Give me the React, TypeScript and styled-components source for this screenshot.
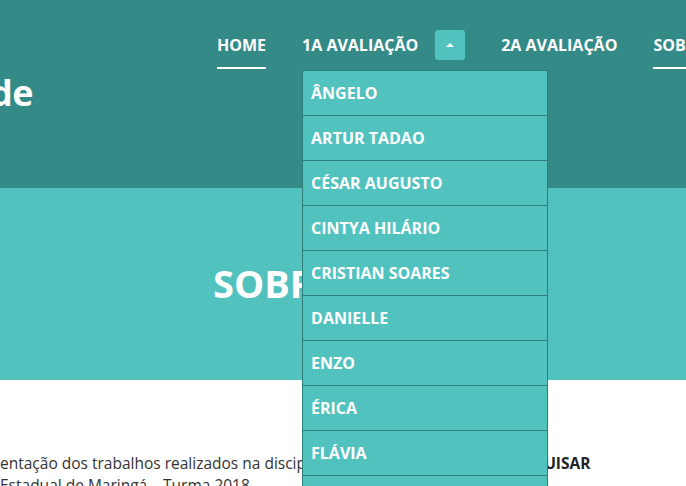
import React from "react";
import styled, { createGlobalStyle } from "styled-components";

const GlobalStyle = createGlobalStyle`
  html, body {
    margin: 0;
    padding: 0;
    width: 686px;
    height: 486px;
    overflow: hidden;
    background: #ffffff;
    font-family: "Open Sans", "Noto Sans", sans-serif;
  }
  * { box-sizing: border-box; }
`;

const Page = styled.div`
  width: 686px;
  height: 486px;
  overflow: hidden;
  display: flex;
  flex-direction: column;
`;

const Header = styled.header`
  flex: 0 0 188px;
  background: #338a87;
  display: grid;
  grid-template-columns: 217px 1fr;
  align-items: start;
  position: relative;
  z-index: 2;
`;

const Brand = styled.h1`
  margin: 75px 0 0 -10px;
  font-size: 36px;
  line-height: 36px;
  font-weight: 700;
  color: #ffffff;
  letter-spacing: -0.5px;
`;

const Nav = styled.ul`
  list-style: none;
  margin: 30px 0 0 0;
  padding: 0;
  display: flex;
  gap: 36px;
  white-space: nowrap;
`;

const NavItem = styled.li`
  position: relative;
  display: flex;
  align-items: flex-start;
  gap: 17px;
  flex-shrink: 0;
`;

const NavLink = styled.a<{ $active?: boolean }>`
  display: block;
  font-size: 16px;
  font-weight: 700;
  line-height: 30px;
  padding-bottom: 7px;
  color: #ffffff;
  text-decoration: none;
  border-bottom: 2px solid ${(p) => (p.$active ? "#ffffff" : "transparent")};
`;

const Toggle = styled.button`
  width: 30px;
  height: 30px;
  border: none;
  border-radius: 3px;
  background: #52c2bf;
  display: flex;
  align-items: center;
  justify-content: center;
  padding: 0;
  cursor: pointer;
`;

const Caret = styled.span`
  width: 0;
  height: 0;
  border-left: 4px solid transparent;
  border-right: 4px solid transparent;
  border-bottom: 4px solid #ffffff;
`;

const Dropdown = styled.ul`
  position: absolute;
  left: 0;
  top: 40px;
  width: 246px;
  margin: 0;
  padding: 0;
  list-style: none;
  background: #52c2bf;
  border: 1px solid #2f7d7a;
  border-bottom: none;
  z-index: 10;
`;

const DropItem = styled.li`
  height: 45px;
  padding: 0 8px;
  display: flex;
  align-items: center;
  border-bottom: 1px solid #2f7d7a;
  font-size: 16px;
  font-weight: 700;
  color: #ffffff;
`;

const Hero = styled.section`
  flex: 0 0 192px;
  background: #52c2bf;
  display: flex;
  align-items: flex-start;
`;

const HeroTitle = styled.h2`
  margin: 76px 0 0 213px;
  font-size: 38px;
  line-height: 38px;
  font-weight: 700;
  color: #ffffff;
`;

const Content = styled.section`
  flex: 1;
  background: #ffffff;
  padding-top: 72px;
`;

const Paragraph = styled.p`
  margin: 0;
  font-size: 15.5px;
  line-height: 22px;
  color: #333333;
  white-space: nowrap;
`;

const Strong = styled.b`
  font-weight: 700;
  color: #222222;
`;

const students = [
  "ÂNGELO",
  "ARTUR TADAO",
  "CÉSAR AUGUSTO",
  "CINTYA HILÁRIO",
  "CRISTIAN SOARES",
  "DANIELLE",
  "ENZO",
  "ÉRICA",
  "FLÁVIA",
  "GABRIEL",
  "GUSTAVO",
];

export default function App() {
  return (
    <>
      <GlobalStyle />
      <Page>
        <Header>
          <Brand>de</Brand>
          <Nav>
            <NavItem>
              <NavLink $active>HOME</NavLink>
            </NavItem>
            <NavItem>
              <NavLink>1A AVALIAÇÃO</NavLink>
              <Toggle aria-label="toggle">
                <Caret />
              </Toggle>
              <Dropdown>
                {students.map((s) => (
                  <DropItem key={s}>{s}</DropItem>
                ))}
              </Dropdown>
            </NavItem>
            <NavItem>
              <NavLink>2A AVALIAÇÃO</NavLink>
            </NavItem>
            <NavItem>
              <NavLink $active>SOBRE</NavLink>
            </NavItem>
          </Nav>
        </Header>
        <Hero>
          <HeroTitle>SOBRE</HeroTitle>
        </Hero>
        <Content>
          <Paragraph>
            entação dos trabalhos realizados na disciplina{" "}
            <Strong>PENSAR, ENSINAR E A PESQUISAR</Strong>
            <br />
            Estadual de Maringá – Turma 2018
          </Paragraph>
        </Content>
      </Page>
    </>
  );
}
